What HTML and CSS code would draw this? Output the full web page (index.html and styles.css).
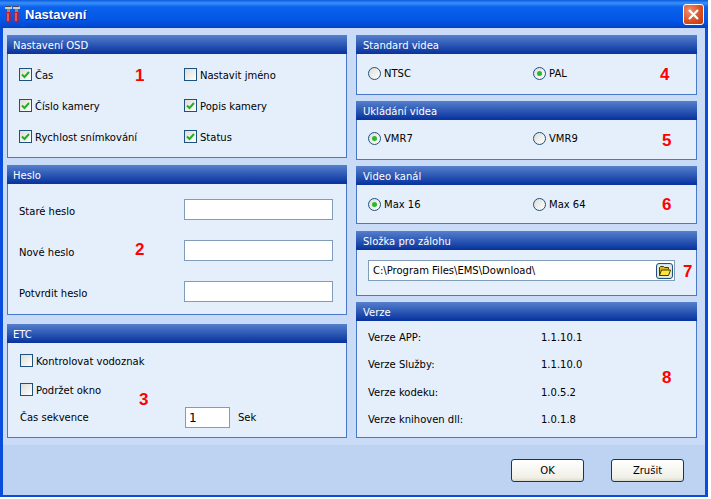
FILE: index.html
```html
<!DOCTYPE html>
<html lang="cs">
<head>
<meta charset="utf-8">
<title>Nastavení</title>
<link rel="stylesheet" href="styles.css">
</head>
<body>
<div class="window">
  <div class="titlebar">
    <svg class="app-icon" width="15" height="18" viewBox="0 0 15 18">
      <path d="M0 1h6l1 1v2H0z" fill="#c8ccd4"/><path d="M0 1h6v1H0z" fill="#4a4a50"/>
      <path d="M8 1h6l1 1v2H8z" fill="#c8ccd4"/><path d="M8 1h6v1H8z" fill="#4a4a50"/>
      <path d="M2 4h3v3H2zM10 4h3v3h-3z" fill="#8a8a90"/>
      <path d="M1.5 7h4v9.5l-1 1h-2l-1-1z" fill="#e01010"/><path d="M2.5 8h1v8h-1z" fill="#ff9a88"/>
      <path d="M9.5 7h4v9.5l-1 1h-2l-1-1z" fill="#e01010"/><path d="M10.5 8h1v8h-1z" fill="#ff9a88"/>
    </svg>
    <span class="title">Nastavení</span>
    <div class="close">
      <svg width="13" height="13" viewBox="0 0 13 13"><path d="M2 2l9 9M11 2l-9 9" stroke="#fff" stroke-width="2.2" fill="none"/></svg>
    </div>
  </div>
  <div class="body">
    <div class="content">
      <div class="col col-left">
        <section class="panel h-osd">
          <header class="panel-head">Nastavení OSD</header>
          <div class="panel-body osd-grid">
            <label class="opt"><span class="check on"><svg width="9" height="9" viewBox="0 0 9 9"><path d="M1 4.5l2.5 2.5L8 2" stroke="#22b022" stroke-width="2" fill="none"/></svg></span>Čas</label>
            <label class="opt"><span class="check"></span>Nastavit jméno</label>
            <label class="opt"><span class="check on"><svg width="9" height="9" viewBox="0 0 9 9"><path d="M1 4.5l2.5 2.5L8 2" stroke="#22b022" stroke-width="2" fill="none"/></svg></span>Číslo kamery</label>
            <label class="opt"><span class="check on"><svg width="9" height="9" viewBox="0 0 9 9"><path d="M1 4.5l2.5 2.5L8 2" stroke="#22b022" stroke-width="2" fill="none"/></svg></span>Popis kamery</label>
            <label class="opt"><span class="check on"><svg width="9" height="9" viewBox="0 0 9 9"><path d="M1 4.5l2.5 2.5L8 2" stroke="#22b022" stroke-width="2" fill="none"/></svg></span>Rychlost snímkování</label>
            <label class="opt"><span class="check on"><svg width="9" height="9" viewBox="0 0 9 9"><path d="M1 4.5l2.5 2.5L8 2" stroke="#22b022" stroke-width="2" fill="none"/></svg></span>Status</label>
          </div>
          <span class="num n1">1</span>
        </section>
        <section class="panel h-pass">
          <header class="panel-head">Heslo</header>
          <div class="panel-body pass-grid">
            <span class="pass-label">Staré heslo</span><span class="field"></span>
            <span class="pass-label">Nové heslo</span><span class="field"></span>
            <span class="pass-label">Potvrdit heslo</span><span class="field"></span>
          </div>
          <span class="num n2">2</span>
        </section>
        <section class="panel h-etc">
          <header class="panel-head">ETC</header>
          <div class="panel-body etc-list">
            <label class="opt"><span class="check"></span>Kontrolovat vodoznak</label>
            <label class="opt"><span class="check"></span>Podržet okno</label>
            <div class="seq"><span class="seq-label">Čas sekvence</span><span class="field seq-field">1</span><span>Sek</span></div>
          </div>
          <span class="num n3">3</span>
        </section>
      </div>
      <div class="col col-right">
        <section class="panel h-std">
          <header class="panel-head">Standard videa</header>
          <div class="panel-body radio-grid">
            <label class="opt"><span class="radio"></span>NTSC</label>
            <label class="opt"><span class="radio on"></span>PAL</label>
          </div>
          <span class="num n4">4</span>
        </section>
        <section class="panel h-save">
          <header class="panel-head">Ukládání videa</header>
          <div class="panel-body radio-grid tight">
            <label class="opt"><span class="radio on"></span>VMR7</label>
            <label class="opt"><span class="radio"></span>VMR9</label>
          </div>
          <span class="num n5">5</span>
        </section>
        <section class="panel h-chan">
          <header class="panel-head">Video kanál</header>
          <div class="panel-body radio-grid">
            <label class="opt"><span class="radio on"></span>Max 16</label>
            <label class="opt"><span class="radio"></span>Max 64</label>
          </div>
          <span class="num n6">6</span>
        </section>
        <section class="panel h-dir">
          <header class="panel-head">Složka pro zálohu</header>
          <div class="panel-body dir-row">
            <div class="path">
              <span>C:\Program Files\EMS\Download\</span>
              <span class="browse">
                <svg width="13" height="12" viewBox="0 0 13 12"><path d="M1.5 10.5v-8l1-1h3l1 1h4v2" fill="#d8b820" stroke="#4a3a00"/><path d="M1.5 10.5l2-5.5h9l-2 5.5z" fill="#ffe63c" stroke="#4a3a00"/></svg>
              </span>
            </div>
          </div>
          <span class="num n7">7</span>
        </section>
        <section class="panel h-ver">
          <header class="panel-head">Verze</header>
          <div class="panel-body ver-grid">
            <span>Verze APP:</span><span>1.1.10.1</span>
            <span>Verze Služby:</span><span>1.1.10.0</span>
            <span>Verze kodeku:</span><span>1.0.5.2</span>
            <span>Verze knihoven dll:</span><span>1.0.1.8</span>
          </div>
          <span class="num n8">8</span>
        </section>
      </div>
    </div>
    <div class="footer">
      <button class="btn" type="button">OK</button>
      <button class="btn" type="button">Zrušit</button>
    </div>
  </div>
</div>
</body>
</html>
```
FILE: styles.css
```css
html, body { margin: 0; padding: 0; background: #fff; }
body { font-family: "DejaVu Sans", sans-serif; font-size: 10px; color: #000; }
.window { width: 708px; height: 497px; display: flex; flex-direction: column; box-sizing: border-box; background: #0a4ddc; overflow: hidden; }
.titlebar { height: 28px; flex: none; display: flex; align-items: center; padding: 0 4px 0 5px; box-sizing: border-box;
  background: linear-gradient(#0a5ae0 0, #3a90fa 3px, #0a62ec 7px, #0256e6 20px, #0348d2 26px, #0040c0 28px); }
.app-icon { flex: none; margin-right: 5px; }
.title { flex: 1; color: #fff; font: bold 13px "Liberation Sans", Arial, sans-serif; text-shadow: 1px 1px 0 #0a2a8c; }
.close { width: 21px; height: 21px; box-sizing: border-box; border: 1px solid #fff; border-radius: 3px; display: flex; align-items: center; justify-content: center; background: radial-gradient(circle at 30% 30%, #f09070, #d84c20 60%, #c03810); }
.body { flex: 1; display: flex; flex-direction: column; margin: 0 3px 2px 3px; background: #c9dbf7; }
.content { flex: none; height: 417px; display: flex; gap: 9px; padding: 7px 8px 0 4px; box-sizing: border-box; }
.col { display: flex; flex-direction: column; }
.col-left { width: 340px; }
.col-right { width: 341px; }
.panel { position: relative; box-sizing: border-box; border: 1px solid #4a78c8; border-top: 0; background: #e5effc; }
.panel-head { height: 19px; margin: 0 -1px; padding: 5px 0 0 6px; box-sizing: border-box; color: #fff;
  background: linear-gradient(#5580cc, #0a35a0 95%); }
.col-right .panel-head { padding-left: 7px; }
.h-osd { height: 123px; margin-bottom: 7px; }
.h-pass { height: 150px; margin-bottom: 9px; }
.h-etc { height: 114px; }
.h-std { height: 60px; margin-bottom: 6px; }
.h-save { height: 59px; margin-bottom: 6px; }
.h-chan { height: 58px; margin-bottom: 7px; }
.h-dir { height: 65px; margin-bottom: 6px; }
.h-ver { height: 136px; }
.opt { display: flex; align-items: center; gap: 3px; white-space: nowrap; padding-top: 2px; }
.check { width: 13px; height: 13px; margin-top: -2px; flex: none; box-sizing: border-box; border: 1px solid #1c5180; background: linear-gradient(135deg, #dcdcd7, #fff); display: flex; align-items: center; justify-content: center; }
.radio { width: 13px; height: 13px; flex: none; box-sizing: border-box; border: 1px solid #1c5180; border-radius: 50%; background: linear-gradient(135deg, #dcdcd7, #fff); display: flex; align-items: center; justify-content: center; }
.radio.on::after { content: ""; width: 5px; height: 5px; border-radius: 50%; background: #2cb82c; }
.num { position: absolute; color: #f00; font: bold 17px/18px "Liberation Sans", Arial, sans-serif; }
.n1 { left: 127px; top: 32px; }
.n2 { left: 127px; top: 76px; }
.n3 { left: 131px; top: 67px; }
.n4 { left: 303px; top: 31px; }
.n5 { left: 305px; top: 31px; }
.n6 { left: 305px; top: 30px; }
.n7 { left: 326px; top: 32px; }
.n8 { left: 305px; top: 67px; }
.osd-grid { display: grid; grid-template-columns: 165px 1fr; grid-auto-rows: 31px; padding: 5px 0 0 11px; }
.pass-grid { display: grid; grid-template-columns: 165px 149px; grid-auto-rows: 41px; align-items: center; padding: 5px 0 0 11px; }
.pass-label { padding-top: 3px; }
.field { display: block; box-sizing: border-box; height: 21px; border: 1px solid #7f9db9; background: #fff; }
.etc-list { display: flex; flex-direction: column; padding: 10px 0 0 12px; }
.etc-list .opt { height: 13px; margin-bottom: 14px; }
.seq { display: flex; align-items: center; margin-top: -4px; }
.seq-label { width: 165px; }
.seq-field { width: 45px; margin-right: 8px; padding: 3px 0 0 3px; font-size: 12px; }
.radio-grid { display: grid; grid-template-columns: 165px 1fr; padding: 11px 0 0 11px; }
.radio-grid.tight { padding-top: 10px; }
.dir-row { padding: 10px 0 0 11px; }
.path { width: 307px; height: 21px; box-sizing: border-box; border: 1px solid #7f9db9; background: #fff; display: flex; align-items: center; justify-content: space-between; padding: 0 1px 0 4px; }
.browse { width: 17px; height: 16px; box-sizing: border-box; border: 1px solid #1c5180; border-radius: 3px; background: #ece9d8; box-shadow: inset 0 0 0 1px #cfe2f8; display: flex; align-items: center; justify-content: center; }
.ver-grid { display: grid; grid-template-columns: 173px 1fr; grid-auto-rows: 27.3px; padding: 3px 0 0 11px; align-items: center; }
.footer { flex: 1; display: flex; justify-content: flex-end; gap: 27px; padding: 14px 21px 0 0; background: #bed3f1; }
.btn { width: 73px; height: 23px; box-sizing: border-box; border: 1px solid #003c74; border-radius: 3px; background: linear-gradient(#fff, #f0efe6 85%, #dcd8c8); font: 10px "DejaVu Sans", sans-serif; color: #000; padding: 0; }
```
